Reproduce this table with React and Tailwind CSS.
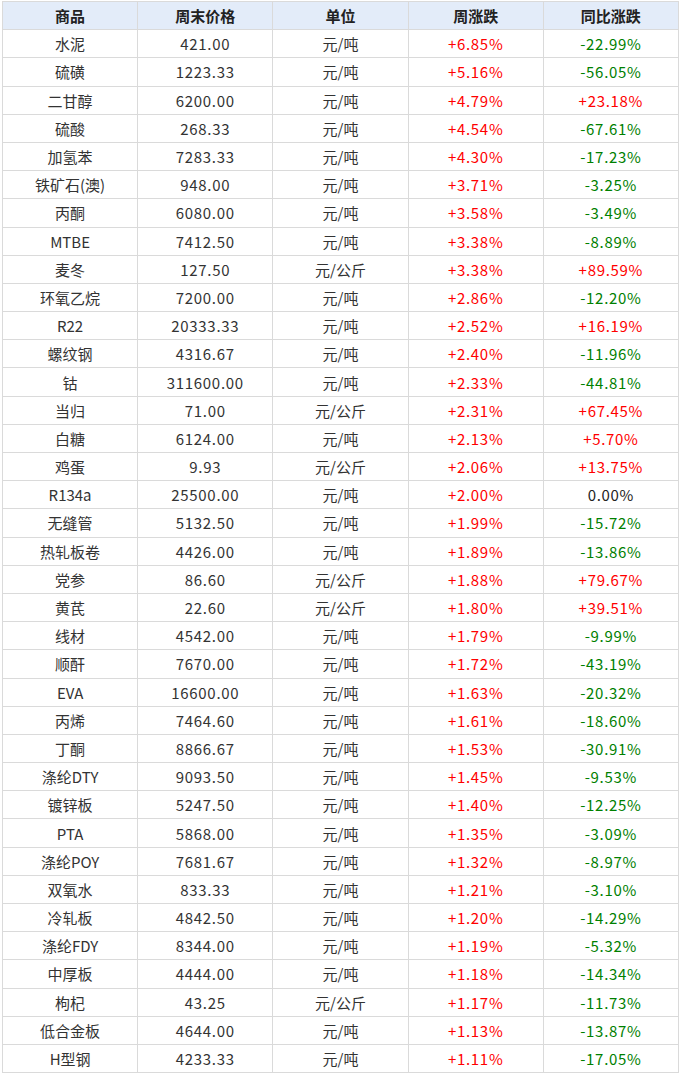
const rows = [
  ["水泥", "421.00", "元/吨", "+6.85%", "-22.99%"],
  ["硫磺", "1223.33", "元/吨", "+5.16%", "-56.05%"],
  ["二甘醇", "6200.00", "元/吨", "+4.79%", "+23.18%"],
  ["硫酸", "268.33", "元/吨", "+4.54%", "-67.61%"],
  ["加氢苯", "7283.33", "元/吨", "+4.30%", "-17.23%"],
  ["铁矿石(澳)", "948.00", "元/吨", "+3.71%", "-3.25%"],
  ["丙酮", "6080.00", "元/吨", "+3.58%", "-3.49%"],
  ["MTBE", "7412.50", "元/吨", "+3.38%", "-8.89%"],
  ["麦冬", "127.50", "元/公斤", "+3.38%", "+89.59%"],
  ["环氧乙烷", "7200.00", "元/吨", "+2.86%", "-12.20%"],
  ["R22", "20333.33", "元/吨", "+2.52%", "+16.19%"],
  ["螺纹钢", "4316.67", "元/吨", "+2.40%", "-11.96%"],
  ["钴", "311600.00", "元/吨", "+2.33%", "-44.81%"],
  ["当归", "71.00", "元/公斤", "+2.31%", "+67.45%"],
  ["白糖", "6124.00", "元/吨", "+2.13%", "+5.70%"],
  ["鸡蛋", "9.93", "元/公斤", "+2.06%", "+13.75%"],
  ["R134a", "25500.00", "元/吨", "+2.00%", "0.00%"],
  ["无缝管", "5132.50", "元/吨", "+1.99%", "-15.72%"],
  ["热轧板卷", "4426.00", "元/吨", "+1.89%", "-13.86%"],
  ["党参", "86.60", "元/公斤", "+1.88%", "+79.67%"],
  ["黄芪", "22.60", "元/公斤", "+1.80%", "+39.51%"],
  ["线材", "4542.00", "元/吨", "+1.79%", "-9.99%"],
  ["顺酐", "7670.00", "元/吨", "+1.72%", "-43.19%"],
  ["EVA", "16600.00", "元/吨", "+1.63%", "-20.32%"],
  ["丙烯", "7464.60", "元/吨", "+1.61%", "-18.60%"],
  ["丁酮", "8866.67", "元/吨", "+1.53%", "-30.91%"],
  ["涤纶DTY", "9093.50", "元/吨", "+1.45%", "-9.53%"],
  ["镀锌板", "5247.50", "元/吨", "+1.40%", "-12.25%"],
  ["PTA", "5868.00", "元/吨", "+1.35%", "-3.09%"],
  ["涤纶POY", "7681.67", "元/吨", "+1.32%", "-8.97%"],
  ["双氧水", "833.33", "元/吨", "+1.21%", "-3.10%"],
  ["冷轧板", "4842.50", "元/吨", "+1.20%", "-14.29%"],
  ["涤纶FDY", "8344.00", "元/吨", "+1.19%", "-5.32%"],
  ["中厚板", "4444.00", "元/吨", "+1.18%", "-14.34%"],
  ["枸杞", "43.25", "元/公斤", "+1.17%", "-11.73%"],
  ["低合金板", "4644.00", "元/吨", "+1.13%", "-13.87%"],
  ["H型钢", "4233.33", "元/吨", "+1.11%", "-17.05%"],
];

function changeColor(v) {
  if (v.startsWith("+")) return "text-[#ff0000]";
  if (v.startsWith("-")) return "text-[#008000]";
  return "text-[#222]";
}

export default function App() {
  const cell = "border border-[#dadada] text-center p-0 leading-none";
  const num = "tracking-[0.7px]";
  return (
    <div
      className="bg-white w-[681px] h-[1076px] pl-[2px] pt-[1px] text-[15px] text-[#333]"
      style={{ fontFamily: '"Noto Sans CJK SC", "Liberation Sans", sans-serif' }}
    >
      <table className="w-[677px] table-fixed border-collapse">
        <thead>
          <tr className="h-[28.2px] bg-[#e3ecf9] font-bold text-[#222]">
            <th className={cell}>商品</th>
            <th className={cell}>周末价格</th>
            <th className={cell}>单位</th>
            <th className={cell}>周涨跌</th>
            <th className={cell}>同比涨跌</th>
          </tr>
        </thead>
        <tbody>
          {rows.map((r) => (
            <tr key={r[0]} className="h-[28.2px]">
              <td className={cell}>{r[0]}</td>
              <td className={`${cell} ${num}`}>{r[1]}</td>
              <td className={cell}>{r[2]}</td>
              <td className={`${cell} ${num} ${changeColor(r[3])}`}>{r[3]}</td>
              <td className={`${cell} ${num} ${changeColor(r[4])}`}>{r[4]}</td>
            </tr>
          ))}
        </tbody>
      </table>
    </div>
  );
}
